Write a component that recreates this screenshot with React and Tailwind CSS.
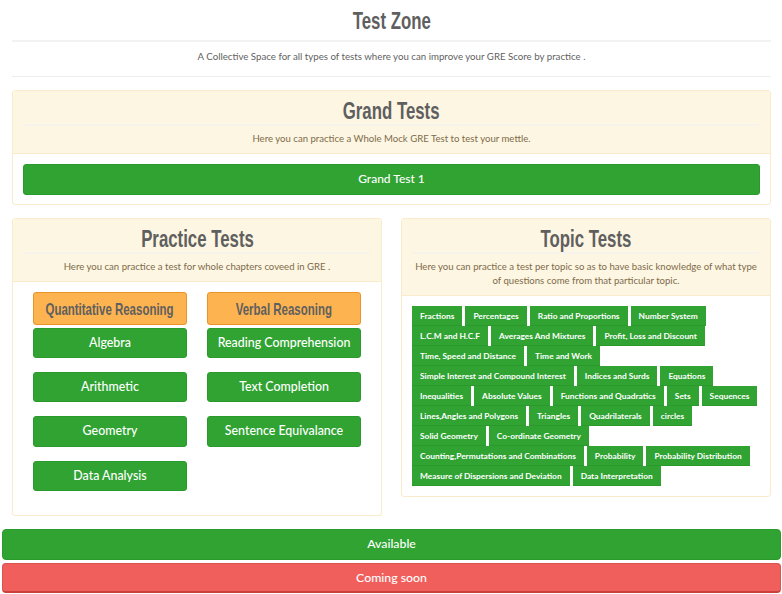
const quant = ['Algebra', 'Arithmetic', 'Geometry', 'Data Analysis'];
const verbal = ['Reading Comprehension', 'Text Completion', 'Sentence Equivalance'];
const topics = [
  'Fractions', 'Percentages', 'Ratio and Proportions', 'Number System',
  'L.C.M and H.C.F', 'Averages And Mixtures', 'Profit, Loss and Discount',
  'Time, Speed and Distance', 'Time and Work',
  'Simple Interest and Compound Interest', 'Indices and Surds', 'Equations',
  'Inequalities', 'Absolute Values', 'Functions and Quadratics', 'Sets', 'Sequences',
  'Lines,Angles and Polygons', 'Triangles', 'Quadrilaterals', 'circles',
  'Solid Geometry', 'Co-ordinate Geometry',
  'Counting,Permutations and Combinations', 'Probability', 'Probability Distribution',
  'Measure of Dispersions and Deviation', 'Data Interpretation',
];

// the display font of the page is not installed, so squeeze a bold sans
function Display({ children }) {
  return (
    <span className="inline-block whitespace-nowrap scale-x-[0.7] font-['Liberation_Sans',sans-serif] font-bold text-[#5f5f5f]">
      {children}
    </span>
  );
}

function PanelHead({ title, children, size = 'h-[63px]' }) {
  return (
    <div className={`${size} bg-[#fdf6e3] border-b border-[#faebcc] px-[11px] rounded-t-[3px] text-center`}>
      <h2 className="text-[24px] leading-[37px] h-[33px] border-b-2 border-[#f5f3ec] box-content"><Display>{title}</Display></h2>
      {children}
    </div>
  );
}

function ChapterButton({ label, tall }) {
  return (
    <button className={`w-[154px] ${tall ? 'h-[31px]' : 'h-[30px]'} mb-[14px] pb-[1px] bg-[#30a332] border border-[#2b9a2d] rounded-[3px] text-white text-[12.4px] font-medium leading-[26px]`}>
      {label}
    </button>
  );
}

function ChapterColumn({ title, items }) {
  return (
    <div className="w-[154px] flex flex-col">
      <div className="h-[33px] mb-[3px] bg-[#fdb350] border border-[#e8942a] rounded-[3px] flex justify-center text-[16.4px] leading-[32px]">
        <Display>{title}</Display>
      </div>
      {items.map((item, i) => <ChapterButton key={item} label={item} tall={i === 2} />)}
    </div>
  );
}

export default function App() {
  return (
    <div className="w-[782px] h-[594px] bg-white overflow-hidden font-['Lato',sans-serif] text-[#5f5f5f]">
      <div className="pl-3 pr-[11px]">
        <header className="text-center">
          <h1 className="text-[24px] leading-[40px] h-[42px] border-b-2 border-[#f2f2f2]"><Display>Test Zone</Display></h1>
          <p className="text-[9.7px] leading-[15px] pt-[7px] h-[35px] border-b border-[#eeeeee]">
            A Collective Space for all types of tests where you can improve your GRE Score by practice .
          </p>
        </header>

        <section className="mt-[13px] h-[115px] border border-[#faebcc] rounded-[3px]">
          <PanelHead title="Grand Tests">
            <p className="text-[9.6px] leading-[15px] pt-[5px] text-[#7d6b4a]">Here you can practice a Whole Mock GRE Test to test your mettle.</p>
          </PanelHead>
          <div className="px-[10px] pt-[10px]">
            <button className="w-full h-[31px] pb-[2px] bg-[#30a332] border border-[#2b9a2d] rounded-[3px] text-white text-[12px] font-medium">Grand Test 1</button>
          </div>
        </section>

        <div className="mt-[13px] flex gap-[19px] items-start">
          <section className="w-[370px] h-[298px] border border-[#faebcc] rounded-[3px]">
            <PanelHead title="Practice Tests">
              <p className="text-[9.6px] leading-[15px] pt-[5px] text-[#7d6b4a]">Here you can practice a test for whole chapters coveed in GRE .</p>
            </PanelHead>
            <div className="flex gap-[20px] pl-[20px] pt-[10px]">
              <ChapterColumn title="Quantitative Reasoning" items={quant} />
              <ChapterColumn title="Verbal Reasoning" items={verbal} />
            </div>
          </section>

          <section className="w-[370px] h-[279px] border border-[#faebcc] rounded-[3px]">
            <PanelHead title="Topic Tests" size="h-[77px]">
              <p className="text-[9.6px] leading-[14px] pt-[6px] -mx-[2px] text-[#7d6b4a]">
                Here you can practice a test per topic so as to have basic knowledge of what type of questions come from that particular topic.
              </p>
            </PanelHead>
            <div className="flex flex-wrap gap-x-[3px] pl-[10px] pr-[9px] pt-[10px]">
              {topics.map((topic) => (
                <span key={topic} className="h-[20px] px-[8px] bg-[#30a332] border-b border-[#2b9a2d] text-white text-[8.4px] font-bold leading-[20px] whitespace-nowrap">
                  {topic}
                </span>
              ))}
            </div>
          </section>
        </div>
      </div>

      <div className="mt-[13px] pl-[2px] pr-[1px] flex flex-col gap-[3px]">
        <button className="w-full h-[31px] pb-[1px] bg-[#30a332] border border-[#2b9a2d] rounded-[4px] text-white text-[12.3px] font-medium">Available</button>
        <button className="w-full h-[30px] pt-[1px] bg-[#f05f5c] border border-[#d9534f] border-b-2 border-b-[#c9403c] rounded-[4px] text-white text-[12.3px] font-medium">Coming soon</button>
      </div>
    </div>
  );
}
